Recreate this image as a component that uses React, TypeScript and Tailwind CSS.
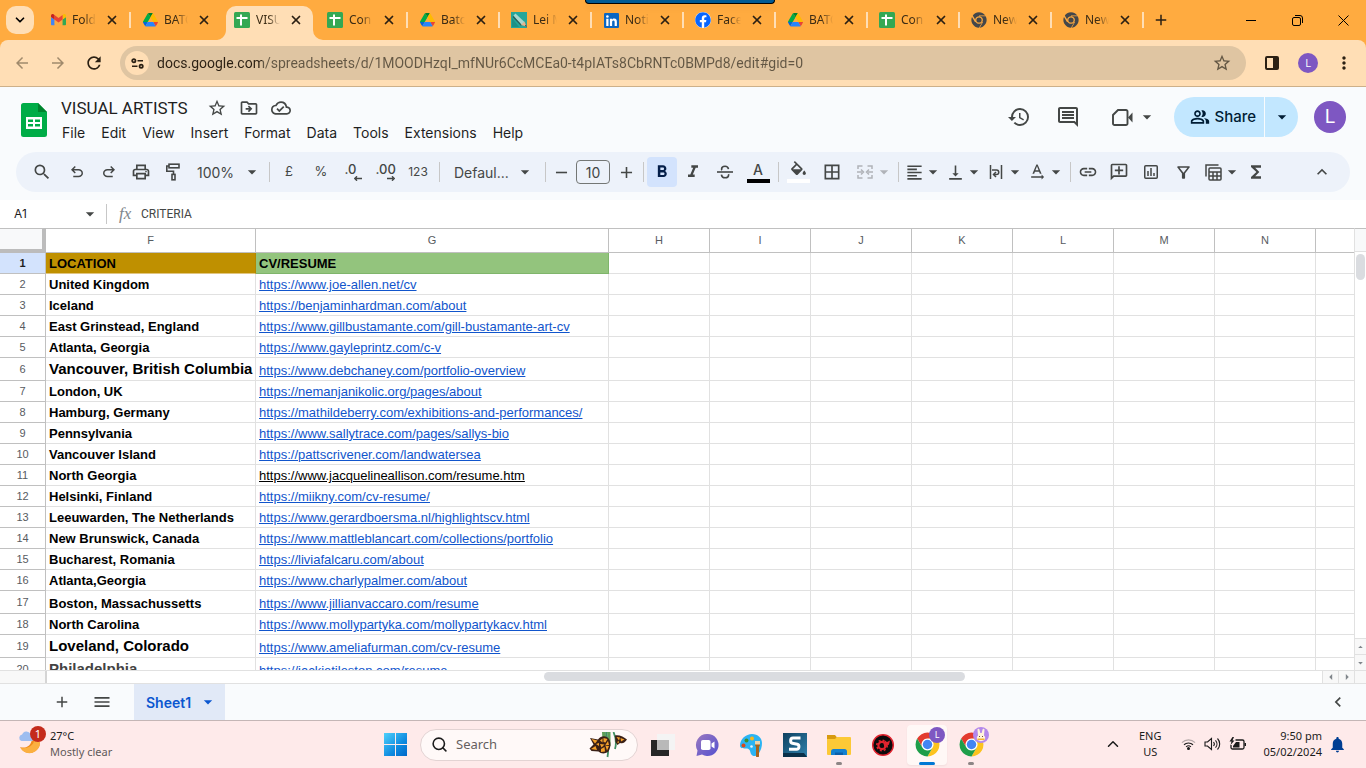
import React, { useState } from 'react';
import {
  MdAdd,
  MdArrowBack,
  MdArrowDropDown,
  MdArrowDropUp,
  MdArrowForward,
  MdArrowLeft,
  MdArrowRight,
  MdBorderAll,
  MdChevronLeft,
  MdFormatAlignLeft,
  MdFormatBold,
  MdFormatItalic,
  MdFunctions,
  MdHistory,
  MdKeyboardArrowUp,
  MdLink,
  MdMenu,
  MdMoreVert,
  MdNotifications,
  MdOutlineAddComment,
  MdOutlineCloudDone,
  MdOutlineComment,
  MdOutlineDriveFileMove,
  MdOutlineFilterAlt,
  MdOutlinePeopleAlt,
  MdOutlinePrint,
  MdRefresh,
  MdRemove,
  MdSearch,
  MdStarBorder,
  MdTextRotationNone,
  MdVerticalAlignBottom,
} from 'react-icons/md';
import { FaFacebook } from 'react-icons/fa';
import { ChevronDown, ChevronUp, Search, X } from 'lucide-react';

/* ---------- logos ---------- */

const GmailLogo = () => (
  <svg viewBox="52 42 88 66" className="w-[15px]">
    <path fill="#4285f4" d="M58 108h14V74L52 59v43c0 3.32 2.69 6 6 6" />
    <path fill="#34a853" d="M120 108h14c3.32 0 6-2.69 6-6V59l-20 15" />
    <path fill="#fbbc04" d="M120 48v26l20-15v-8c0-7.42-8.47-11.65-14.4-7.2" />
    <path fill="#ea4335" d="M72 74V48l24 18 24-18v26L96 92" />
    <path fill="#c5221f" d="M52 51v8l20 15V48l-5.6-4.2c-5.94-4.45-14.4-.22-14.4 7.2" />
  </svg>
);

const DriveLogo = () => (
  <svg viewBox="0 0 87.3 78" className="w-[15px]">
    <path fill="#0066da" d="m6.6 66.85 3.85 6.65c.8 1.4 1.95 2.5 3.3 3.3l13.75-23.8h-27.5c0 1.55.4 3.1 1.2 4.5z" />
    <path fill="#00ac47" d="m43.65 25-13.75-23.8c-1.35.8-2.5 1.9-3.3 3.3l-25.4 44a9.06 9.06 0 0 0 -1.2 4.5h27.5z" />
    <path fill="#ea4335" d="m73.55 76.8c1.35-.8 2.5-1.9 3.3-3.3l1.6-2.75 7.65-13.25c.8-1.4 1.2-2.95 1.2-4.5h-27.502l5.852 11.5z" />
    <path fill="#00832d" d="m43.65 25 13.75-23.8c-1.35-.8-2.9-1.2-4.5-1.2h-18.5c-1.6 0-3.15.45-4.5 1.2z" />
    <path fill="#2684fc" d="m59.8 53h-32.3l-13.75 23.8c1.35.8 2.9 1.2 4.5 1.2h50.8c1.6 0 3.15-.45 4.5-1.2z" />
    <path fill="#ffba00" d="m73.4 26.5-12.7-22c-.8-1.4-1.95-2.5-3.3-3.3l-13.75 23.8 16.15 28h27.45c0-1.55-.4-3.1-1.2-4.5z" />
  </svg>
);

const SheetFavicon = () => (
  <svg viewBox="0 0 16 16" className="w-4">
    <rect width="16" height="16" rx="1.5" fill="#34a853" />
    <path d="M2.5 6h11M7 2.5v11" stroke="#fff" strokeWidth="2" />
  </svg>
);

const PencilFavicon = () => (
  <svg viewBox="0 0 16 16" className="w-4">
    <rect width="16" height="16" fill="#26a69a" />
    <path d="M1 6v9h7z" fill="#1f9186" />
    <path d="M2.500 3.500l2-2 9 8.500-3 3.500z" fill="#a9d6cd" />
    <path d="M2 4.500l8.500 9" stroke="#2a5f58" strokeWidth="1.200" fill="none" />
    <path d="M10 13l3.500-3.500 2 5z" fill="#e8b48a" />
    <path d="M13.800 13.800l1.200-1 .8 2.200z" fill="#7a2e1c" />
  </svg>
);

const LinkedInLogo = () => (
  <svg viewBox="0 0 24 24" className="w-[15px]">
    <rect width="24" height="24" rx="1.8" fill="#0a66c2" />
    <circle cx="5.400" cy="5.500" r="2.100" fill="#fff" />
    <path
      fill="#fff"
      d="M3.600 9.200h3.600v11.400H3.600zM9.400 9.200h3.400v1.600c.6-1.100 1.800-1.900 3.500-1.900 3.500 0 4.300 2.300 4.300 5.400v6.300H17v-5.600c0-1.500-.1-3.100-1.900-3.100s-2.100 1.500-2.100 3v5.700H9.400z"
    />
  </svg>
);

const FacebookLogo = () => (
  <span className="rounded-full bg-white">
    <FaFacebook size={16} color="#0866ff" />
  </span>
);

interface ChromeLogoProps {
  colors: [string, string, string];
  dot: string;
  ring: string;
  gap?: string;
  className: string;
}

// Three identical bands turned by 120 degrees around the dot.
const ChromeLogo: React.FC<ChromeLogoProps> = ({ colors, dot, ring, gap, className }) => (
  <svg viewBox="1 1 46 46" className={className}>
    <circle cx="24" cy="24" r="12" fill={ring} />
    {colors.map((color, i) => (
      <g key={i} transform={`rotate(${i * 120} 24 24)`}>
        <path d="M4.950 13A22 22 0 0 1 43.050 13H24A11 11 0 0 0 14.470 29.500z" fill={color} />
        {gap && <path d="M24 13h22" stroke={gap} strokeWidth="4" />}
      </g>
    ))}
    <circle cx="24" cy="24" r={gap ? 7.5 : 8.7} fill={dot} />
  </svg>
);

const GreyChrome = () => (
  <ChromeLogo colors={['#44474a', '#44474a', '#44474a']} dot="#44474a" ring="#ffab40" gap="#ffab40" className="w-4" />
);

const SheetsLogo = () => (
  <svg viewBox="0 0 26 34" className="h-[34px] w-[26px]">
    <path d="M2.500 0H17l9 9v22.500a2.500 2.500 0 0 1-2.500 2.500h-21A2.500 2.500 0 0 1 0 31.500v-29A2.500 2.500 0 0 1 2.500 0z" fill="#00ac47" />
    <path d="M17 0l9 9h-9z" fill="#00832d" />
    <path d="M5 14h16v12H5zm2 2.500v2.500h5v-2.500zm7 0v2.500h5V16.500zM7 21v2.500h5V21zm7 0v2.500h5V21z" fill="#fff" fillRule="evenodd" />
  </svg>
);

/* ---------- toolbar drawings ---------- */

interface SymbolProps {
  d: string;
  size?: number;
}

const Symbol: React.FC<SymbolProps> = ({ d, size = 18 }) => (
  <svg viewBox="0 -960 960 960" width={size} height={size} fill="currentColor">
    <path d={d} />
  </svg>
);

const UndoIcon = () => (
  <Symbol d="M280-200v-80h284q63 0 109.500-40T720-420q0-60-46.500-100T564-560H312l104 104-56 56-200-200 200-200 56 56-104 104h252q97 0 166.500 63T800-420q0 94-69.500 157T564-200H280Z" />
);

const RedoIcon = () => (
  <Symbol d="M396-200q-97 0-166.500-63T160-420q0-94 69.500-157T396-640h252L544-744l56-56 200 200-200 200-56-56 104-104H396q-63 0-109.500 40T240-420q0 60 46.500 100T396-280h284v80H396Z" />
);

const PaintFormatIcon = () => (
  <svg viewBox="0 0 16 18" width="16" height="18" fill="none" stroke="currentColor" strokeWidth="1.600">
    <rect x="4" y="1.200" width="10" height="3.600" />
    <path d="M4 3H1.800v5.200h6.700v3" />
    <rect x="7" y="11.400" width="3" height="5.400" />
  </svg>
);

const StrikeIcon = () => (
  <svg viewBox="0 0 16 14" width="16" height="14" fill="none" stroke="currentColor" strokeWidth="1.600">
    <path d="M0 7h16" />
    <path d="M11.500 4.200C11.200 2.300 9.800 1.200 8 1.200S4.600 2.300 4.600 4c0 .5.1.9.3 1.200M4.400 9.600c.3 2 1.800 3.200 3.700 3.200s3.500-1.100 3.500-2.900c0-.3 0-.6-.1-.8" />
  </svg>
);

const FillIcon = () => (
  <svg viewBox="2 0 20 17" width="17" height="14" fill="currentColor">
    <path d="M16.560 8.940L7.620 0 6.210 1.410l2.380 2.380-5.150 5.150a1.490 1.490 0 0 0 0 2.120l5.500 5.500c.29.29.68.44 1.060.44s.77-.15 1.060-.44l5.500-5.500c.59-.58.59-1.530 0-2.120zM5.210 10L10 5.210 14.790 10H5.210zM19 11.500s-2 2.170-2 3.500c0 1.100.9 2 2 2s2-.9 2-2c0-1.330-2-3.500-2-3.500z" />
  </svg>
);

const MergeIcon = () => (
  <svg viewBox="0 0 16 14" width="16" height="14" fill="none" stroke="currentColor" strokeWidth="1.500">
    <path d="M5.500 1H1v3M1 10v3h4.500M10.500 1H15v3M15 10v3h-4.500M0 7h5.500M16 7h-5.500" />
    <path d="M4 4.500L6.500 7 4 9.500M12 4.500L9.500 7 12 9.500" />
  </svg>
);

const WrapIcon = () => (
  <svg viewBox="0 0 14 14" width="14" height="14" fill="none" stroke="currentColor" strokeWidth="1.500">
    <path d="M1.500 0v14M12.500 0v14M3 5h4.500a2.200 2.200 0 0 1 0 4.500H5" />
    <path d="M7 7L4.500 9.500 7 12" />
  </svg>
);

const ChartIcon = () => (
  <svg viewBox="0 0 14 14" width="14" height="14" fill="none" stroke="currentColor" strokeWidth="1.500">
    <rect x=".75" y=".75" width="12.500" height="12.500" rx="1" />
    <path d="M4 6v5M7 3v8M10 8v3" />
  </svg>
);

const TableViewIcon = () => (
  <svg viewBox="0 0 17 17" width="17" height="17" fill="none" stroke="currentColor" strokeWidth="1.500">
    <path d="M1 12.500V1h12.500" />
    <rect x="4" y="4" width="12" height="12" rx="1" />
    <path d="M4 8h12M4 12h12M8 8v8M12 8v8" />
  </svg>
);

const VideoIcon = () => (
  <svg viewBox="0 0 21 17" width="21" height="17" fill="currentColor">
    <path d="M6 1h8A1.500 1.500 0 0 1 15.500 2.500v12a1.500 1.500 0 0 1-1.500 1.500H2.500A1.500 1.500 0 0 1 1 14.500V6z" fill="none" stroke="currentColor" strokeWidth="1.900" />
    <path d="M16 8.500l4.500-5v10z" />
  </svg>
);

const SiteSettingsIcon = () => (
  <svg viewBox="0 0 14 12" width="13" height="11" fill="none" stroke="#2b2013" strokeWidth="1.900">
    <circle cx="3" cy="3" r="1.800" />
    <path d="M7 3h6M1 9h6" />
    <circle cx="11" cy="9" r="1.800" />
  </svg>
);

/* ---------- browser chrome ---------- */

const tabs = [
  { title: 'Fold', icon: <GmailLogo /> },
  { title: 'BATC', icon: <DriveLogo /> },
  { title: 'VISU', icon: <SheetFavicon />, active: true },
  { title: 'Con', icon: <SheetFavicon /> },
  { title: 'Batc', icon: <DriveLogo /> },
  { title: 'Lei M', icon: <PencilFavicon /> },
  { title: 'Noti', icon: <LinkedInLogo /> },
  { title: 'Face', icon: <FacebookLogo /> },
  { title: 'BATC', icon: <DriveLogo /> },
  { title: 'Con', icon: <SheetFavicon /> },
  { title: 'New', icon: <GreyChrome /> },
  { title: 'New', icon: <GreyChrome /> },
];

const TabStrip = () => (
  <div className="relative flex h-10 shrink-0 items-center bg-[#ffab40] pl-1.5">
    <div className="absolute top-0 left-[585px] h-1 w-[190px] rounded-b-sm border-x border-b border-black bg-[#005a94] shadow-md" />
    <button aria-label="Search tabs" className="flex size-7 items-center justify-center rounded-[10px] bg-[#ffdeb5]">
      <ChevronDown size={14} strokeWidth={3} />
    </button>
    <div role="tablist" className="ml-[5px] flex h-full">
      {tabs.map((tab, i) => {
        const beforeActive = tabs[i + 1]?.active;
        return (
          <div
            key={i}
            role="tab"
            aria-selected={!!tab.active}
            className={`relative flex w-[92px] items-center pl-[11px] ${tab.active ? 'mr-px' : ''}`}
          >
            {tab.active && (
              <svg viewBox="0 0 108 34" className="absolute bottom-0 -left-2 h-[34px] w-[108px]">
                <path d="M0 34a10 10 0 0 0 11-10V10A10 10 0 0 1 21 0h67a10 10 0 0 1 10 10v14a10 10 0 0 0 10 10z" fill="#ffdeb5" />
              </svg>
            )}
            <span className="relative flex w-4 justify-center">{tab.icon}</span>
            <span className="relative ml-1.5 w-6 overflow-hidden mask-r-from-50% font-[Noto_Sans,sans-serif] text-[12px] leading-4 whitespace-nowrap text-[#3b2b14]">
              {tab.title}
            </span>
            <button aria-label="Close tab" className="relative ml-[9px] text-[#2b2013]">
              <X size={14} strokeWidth={3} />
            </button>
            {!tab.active && !beforeActive && <span className="absolute right-0 h-4 w-0.5 bg-[#ffdeb5]" />}
          </div>
        );
      })}
    </div>
    <button aria-label="New tab" className="ml-2 text-[#2b2013]">
      <MdAdd size={18} />
    </button>
    <div className="ml-auto flex">
      <button aria-label="Minimize" className="flex w-[46px] justify-center">
        <svg width="10" height="10" stroke="#000"><path d="M0 5.500h10" /></svg>
      </button>
      <button aria-label="Restore" className="flex w-[46px] justify-center">
        <svg width="11" height="11" fill="none" stroke="#000">
          <rect x=".5" y="2.500" width="8" height="8" rx="1.500" />
          <path d="M3 .5h5a2.500 2.500 0 0 1 2.500 2.500v5" />
        </svg>
      </button>
      <button aria-label="Close" className="flex w-[46px] justify-center">
        <svg width="11" height="11" stroke="#000"><path d="M.5 .5l10 10M10.500 .5l-10 10" /></svg>
      </button>
    </div>
  </div>
);

const AddressBar = () => {
  const [url, setUrl] = useState('docs.google.com/spreadsheets/d/1MOODHzqI_mfNUr6CcMCEa0-t4pIATs8CbRNTc0BMPd8/edit#gid=0');

  return (
    <div className="bg-[#ffab40]">
      <div className="flex h-[47px] shrink-0 items-center rounded-t-lg border-b border-[#cdb08a] bg-[#ffdeb5] text-[#2b2013]">
        <button aria-label="Back" className="ml-3 flex w-5 justify-center text-[#a08a6c]"><MdArrowBack size={18} /></button>
        <button aria-label="Forward" className="ml-4 flex w-5 justify-center text-[#a08a6c]"><MdArrowForward size={18} /></button>
        <button aria-label="Reload" className="ml-4 flex w-5 justify-center"><MdRefresh size={20} /></button>
        <div className="ml-4 flex h-[34px] flex-1 items-center rounded-full bg-[#dfc5a2] pl-[5px]">
          <button aria-label="Site information" className="flex size-6 items-center justify-center rounded-full bg-[#ffdeb5]">
            <SiteSettingsIcon />
          </button>
          <input
            aria-label="Address"
            value={url}
            onChange={(e) => setUrl(e.target.value)}
            className="ml-2 h-6 flex-1 bg-[linear-gradient(to_right,#2b2013_105px,#635744_105px)] bg-clip-text font-[Roboto,sans-serif] text-[14px] text-transparent outline-none"
          />
          <button aria-label="Bookmark" className="mr-3.5 text-[#635744]"><MdStarBorder size={20} /></button>
        </div>
        <button aria-label="Side panel" className="ml-[18px]">
          <svg width="16" height="16" viewBox="0 0 16 16">
            <rect x="2" y="2" width="12" height="12" rx="1" fill="none" stroke="#2b2013" strokeWidth="2" />
            <path d="M9 2h5v12H9z" fill="#2b2013" />
          </svg>
        </button>
        <span className="ml-[18px] flex size-5 items-center justify-center rounded-full bg-[#7e57c2] text-[11px] text-white">L</span>
        <button aria-label="Menu" className="mr-3 ml-4"><MdMoreVert size={20} /></button>
      </div>
    </div>
  );
};

/* ---------- docs header ---------- */

const menus = ['File', 'Edit', 'View', 'Insert', 'Format', 'Data', 'Tools', 'Extensions', 'Help'];

const DocsHeader = () => (
  <header className="flex h-[65px] shrink-0 items-start font-[Inter,sans-serif] text-[#444746]">
    <div className="mt-4 ml-[21px]"><SheetsLogo /></div>
    <div className="ml-3.5 pt-2">
      <div className="flex h-[26px] items-center">
        <h1 className="font-[Roboto,sans-serif] text-[17px] leading-6 text-[#1f1f1f]">VISUAL ARTISTS</h1>
        <button aria-label="Star" className="ml-[19px]"><MdStarBorder size={20} /></button>
        <button aria-label="Move" className="ml-3"><MdOutlineDriveFileMove size={20} /></button>
        <button aria-label="Document status" className="ml-3"><MdOutlineCloudDone size={20} /></button>
      </div>
      <nav className="flex gap-4 pt-0.5 pl-px text-[14px] leading-5 text-[#1f1f1f]">
        {menus.map((m) => (
          <button key={m}>{m}</button>
        ))}
      </nav>
    </div>
    <div className="mt-2.5 ml-auto flex h-10 items-center">
      <button aria-label="History" className="flex w-6 justify-center"><MdHistory size={24} /></button>
      <button aria-label="Comments" className="ml-[25px] flex w-6 justify-center"><MdOutlineComment size={24} /></button>
      <button aria-label="Join a call" className="ml-8 flex items-center">
        <VideoIcon />
        <MdArrowDropDown size={20} className="ml-1" />
      </button>
      <button className="ml-[17px] flex h-10 items-center rounded-l-full bg-[#c2e7ff] pr-2 pl-4 text-[15px] font-medium text-[#001d35]">
        <MdOutlinePeopleAlt size={20} className="mr-1" />
        Share
      </button>
      <button aria-label="Share options" className="ml-px flex h-10 w-[33px] items-center justify-center rounded-r-full bg-[#c2e7ff] text-[#001d35]">
        <MdArrowDropDown size={20} />
      </button>
      <button className="mr-5 ml-4 size-8 rounded-full bg-[#7e57c2] text-[19px] leading-8 text-white">L</button>
    </div>
  </header>
);

interface ToolProps {
  label: string;
  className?: string;
  children: React.ReactNode;
}

const Tool: React.FC<ToolProps> = ({ label, className = 'w-8', children }) => (
  <button aria-label={label} className={`flex h-[30px] shrink-0 items-center justify-center rounded ${className}`}>
    {children}
  </button>
);

const DropTool: React.FC<ToolProps> = ({ label, className = '', children }) => (
  <button aria-label={label} className={`flex h-[30px] w-[41px] shrink-0 items-center ${className}`}>
    <span className="flex w-6 shrink-0 justify-center">{children}</span>
    <MdArrowDropDown size={20} className="-ml-[3px] shrink-0" />
  </button>
);

const Divider = () => (
  <span className="flex w-2 shrink-0 justify-center">
    <span className="h-5 w-px bg-[#c7c7c7]" />
  </span>
);

const SmallArrow: React.FC<{ flip?: boolean }> = ({ flip }) => (
  <svg viewBox="0 0 8 5" className={`absolute right-0 bottom-0 h-[5px] w-2 ${flip ? 'rotate-180' : ''}`}>
    <path d="M8 2.500H2M3 .3L.8 2.500 3 4.700" fill="none" stroke="#444746" strokeWidth="1.400" />
  </svg>
);

const Toolbar = () => {
  const [fontSize, setFontSize] = useState('10');

  return (
    <div className="mx-4 mb-2 flex h-10 shrink-0 items-center rounded-full bg-[#edf2fa] pl-2.5 font-[Inter,sans-serif] text-[#444746]">
      <Tool label="Search the menus" className="mr-[3px] w-8"><MdSearch size={20} /></Tool>
      <Tool label="Undo"><UndoIcon /></Tool>
      <Tool label="Redo"><RedoIcon /></Tool>
      <Tool label="Print"><MdOutlinePrint size={20} /></Tool>
      <Tool label="Paint format"><PaintFormatIcon /></Tool>
      <Tool label="Zoom" className="w-[76px] pr-[3px] pl-2 text-[14px]">
        <span className="flex-1 text-left">100%</span>
        <MdArrowDropDown size={20} />
      </Tool>
      <Divider />
      <Tool label="Currency" className="w-8 text-[13px]">£</Tool>
      <Tool label="Percent" className="w-8 text-[13px]">%</Tool>
      <Tool label="Decrease decimals">
        <span className="relative h-[18px] w-[17px] text-left text-[13px] leading-3 font-medium">.0<SmallArrow /></span>
      </Tool>
      <Tool label="Increase decimals">
        <span className="relative h-[18px] w-[19px] text-left text-[13px] leading-3 font-medium">.00<SmallArrow flip /></span>
      </Tool>
      <Tool label="More formats" className="w-[34px] text-[12px]">123</Tool>
      <Divider />
      <Tool label="Font" className="w-[98px] pr-1.5 pl-[11px] text-[14px]">
        <span className="flex-1 text-left">Defaul...</span>
        <MdArrowDropDown size={20} />
      </Tool>
      <Divider />
      <Tool label="Decrease font size" className="w-6"><MdRemove size={19} /></Tool>
      <input
        aria-label="Font size"
        value={fontSize}
        onChange={(e) => setFontSize(e.target.value)}
        className="mx-[3px] h-6 w-[34px] rounded border border-[#747775] text-center text-[14px] outline-none"
      />
      <Tool label="Increase font size" className="w-[26px]"><MdAdd size={19} /></Tool>
      <Divider />
      <Tool label="Bold" className="w-[30px] bg-[#d3e3fd] text-[#041e49]"><MdFormatBold size={20} /></Tool>
      <Tool label="Italic"><MdFormatItalic size={20} /></Tool>
      <Tool label="Strikethrough"><StrikeIcon /></Tool>
      <Tool label="Text color" className="ml-px w-8">
        <span className="flex w-[23px] flex-col items-center border-b-4 border-black text-[14px] leading-[18px] font-medium">A</span>
      </Tool>
      <Divider />
      <Tool label="Fill color">
        <span className="flex h-[22px] w-[23px] flex-col items-center border-b-4 border-white"><FillIcon /></span>
      </Tool>
      <Tool label="Borders" className="ml-0.5 w-8"><MdBorderAll size={20} /></Tool>
      <DropTool label="Merge cells" className="ml-[5px] text-[#b0b3b8]"><MergeIcon /></DropTool>
      <Divider />
      <DropTool label="Horizontal align"><MdFormatAlignLeft size={19} /></DropTool>
      <DropTool label="Vertical align"><MdVerticalAlignBottom size={19} /></DropTool>
      <DropTool label="Text wrapping"><WrapIcon /></DropTool>
      <DropTool label="Text rotation"><MdTextRotationNone size={20} /></DropTool>
      <Divider />
      <Tool label="Insert link" className="w-7"><MdLink size={20} /></Tool>
      <Tool label="Insert comment" className="ml-px w-8"><MdOutlineAddComment size={20} className="-scale-x-100" /></Tool>
      <Tool label="Insert chart"><ChartIcon /></Tool>
      <Tool label="Create a filter"><MdOutlineFilterAlt size={19} /></Tool>
      <DropTool label="Filter views" className="pl-0.5"><TableViewIcon /></DropTool>
      <Tool label="Functions"><MdFunctions size={20} /></Tool>
      <Tool label="Hide the menus" className="mr-3 ml-auto w-8"><MdKeyboardArrowUp size={20} /></Tool>
    </div>
  );
};

const FormulaBar = () => {
  const [cell, setCell] = useState('A1');
  const [formula, setFormula] = useState('CRITERIA');

  return (
    <div className="flex h-7 shrink-0 items-center bg-white font-[Inter,sans-serif] text-[12px] text-[#1f1f1f]">
      <input
        aria-label="Name box"
        value={cell}
        onChange={(e) => setCell(e.target.value)}
        className="w-20 pl-3.5 outline-none"
      />
      <button aria-label="Named ranges"><MdArrowDropDown size={20} className="text-[#444746]" /></button>
      <span className="ml-1.5 h-5 w-px bg-[#c7c7c7]" />
      <span className="ml-3 w-[22px] font-[Liberation_Serif,serif] text-[17px] leading-5 text-[#80868b] italic">fx</span>
      <input
        aria-label="Formula"
        value={formula}
        onChange={(e) => setFormula(e.target.value)}
        className="flex-1 font-[Roboto,sans-serif] text-[#444746] outline-none"
      />
    </div>
  );
};

/* ---------- grid ---------- */

interface Row {
  place: string;
  link: string;
  tall?: boolean;
  big?: boolean;
}

const rows: Row[] = [
  { place: 'United Kingdom', link: 'https://www.joe-allen.net/cv' },
  { place: 'Iceland', link: 'https://benjaminhardman.com/about' },
  { place: 'East Grinstead, England', link: 'https://www.gillbustamante.com/gill-bustamante-art-cv' },
  { place: 'Atlanta, Georgia', link: 'https://www.gayleprintz.com/c-v' },
  { place: 'Vancouver, British Columbia', link: 'https://www.debchaney.com/portfolio-overview', tall: true, big: true },
  { place: 'London, UK', link: 'https://nemanjanikolic.org/pages/about' },
  { place: 'Hamburg, Germany', link: 'https://mathildeberry.com/exhibitions-and-performances/' },
  { place: 'Pennsylvania', link: 'https://www.sallytrace.com/pages/sallys-bio' },
  { place: 'Vancouver Island', link: 'https://pattscrivener.com/landwatersea' },
  { place: 'North Georgia', link: 'https://www.jacquelineallison.com/resume.htm' },
  { place: 'Helsinki, Finland', link: 'https://miikny.com/cv-resume/' },
  { place: 'Leeuwarden, The Netherlands', link: 'https://www.gerardboersma.nl/highlightscv.html' },
  { place: 'New Brunswick, Canada', link: 'https://www.mattleblancart.com/collections/portfolio' },
  { place: 'Bucharest, Romania', link: 'https://liviafalcaru.com/about' },
  { place: 'Atlanta,Georgia', link: 'https://www.charlypalmer.com/about' },
  { place: 'Boston, Massachussetts', link: 'https://www.jillianvaccaro.com/resume', tall: true },
  { place: 'North Carolina', link: 'https://www.mollypartyka.com/mollypartykacv.html' },
  { place: 'Loveland, Colorado', link: 'https://www.ameliafurman.com/cv-resume', tall: true, big: true },
  { place: 'Philadelphia', link: 'https://jackietileston.com/resume', tall: true, big: true },
];

const emptyColumns = ['H', 'I', 'J', 'K', 'L', 'M', 'N', ''];

const RowNumber: React.FC<{ n: number; selected?: boolean }> = ({ n, selected }) => (
  <th
    scope="row"
    className={`border-r border-b border-[#c0c0c0] text-[11px] leading-4 ${
      selected ? 'bg-[#d3e3fd] font-bold text-[#1f1f1f]' : 'font-normal text-[#575b5f]'
    }`}
  >
    {n}
  </th>
);

const EmptyCells = () => (
  <>
    {emptyColumns.map((c) => (
      <td key={c} className={`border-b border-[#e1e1e1] ${c ? 'border-r' : ''}`} />
    ))}
  </>
);

const Grid = () => (
  <div className="min-w-0 flex-1 overflow-hidden">
    <table className="w-full table-fixed border-separate border-spacing-0 bg-white font-[Liberation_Sans,Arial,sans-serif] text-[13px] leading-[18px] text-black">
      <colgroup>
        <col className="w-[46px]" />
        <col className="w-[210px]" />
        <col className="w-[353px]" />
        {emptyColumns.map((c) => (
          <col key={c} className={c ? 'w-[101px]' : ''} />
        ))}
      </colgroup>
      <thead>
        <tr className="h-[25px] text-[11px] text-[#575b5f]">
          <th aria-label="Select all" className="border-t border-r-4 border-b-4 border-t-[#c0c0c0] border-r-[#bcbcbc] border-b-[#bcbcbc] bg-[#f8f9fa]" />
          {['F', 'G', ...emptyColumns].map((c) => (
            <th key={c} scope="col" className={`border-y border-[#c0c0c0] pb-0.5 font-normal ${c ? 'border-r' : ''}`}>{c}</th>
          ))}
        </tr>
      </thead>
      <tbody>
        <tr className="h-[21px]">
          <RowNumber n={1} selected />
          <td className="border-r border-b border-[#b28700] border-b-[#e1c580] bg-[#bf9000] pl-[3px] align-bottom font-bold">LOCATION</td>
          <td className="border-r border-b border-[#7fb56b] bg-[#93c47d] pl-[3px] align-bottom font-bold">CV/RESUME</td>
          <EmptyCells />
        </tr>
        {rows.map((row, i) => (
          <tr key={row.link} className={row.tall ? 'h-[23px]' : 'h-[21px]'}>
            <RowNumber n={i + 2} />
            <td
              className={`overflow-hidden border-r border-b border-[#e1e1e1] pl-[3px] align-bottom font-bold whitespace-nowrap ${
                row.big ? 'text-[15px] leading-[22px]' : ''
              } ${i === rows.length - 1 ? 'text-[#434343]' : ''}`}
            >
              {row.place}
            </td>
            <td className="overflow-hidden border-r border-b border-[#e1e1e1] pl-[3px] align-bottom whitespace-nowrap">
              <a href={row.link} className={`underline ${i === 9 ? 'text-black' : 'text-[#1155cc]'}`}>{row.link}</a>
            </td>
            <EmptyCells />
          </tr>
        ))}
      </tbody>
    </table>
  </div>
);

const scrollButton = 'flex items-center justify-center border-[#e1e1e1] bg-[#f8f8f8] text-[#80868b]';

const VerticalScrollbar = () => (
  <div className="flex w-3 shrink-0 flex-col border-t border-l border-[#e1e1e1] border-t-[#c0c0c0] bg-white">
    <div className="h-[23px] border-b border-[#e1e1e1] bg-[#f8f9fa]" />
    <div className="mx-px mt-0.5 h-[26px] rounded-full bg-[#dadce0]" />
    <button aria-label="Scroll up" className={`mt-auto h-4 w-full border-t ${scrollButton}`}><MdArrowDropUp size={14} /></button>
    <button aria-label="Scroll down" className={`h-4 w-full border-t ${scrollButton}`}><MdArrowDropDown size={14} /></button>
  </div>
);

const HorizontalScrollbar = () => (
  <div className="flex h-3.5 shrink-0 border-y border-[#e1e1e1] bg-white">
    <div className="w-[47px] border-r-2 border-[#d5d5d5] bg-[#f8f8f8]" />
    <div className="flex flex-1 items-start pt-px">
      <div className="ml-[39%] h-[9px] w-[33%] rounded-full bg-[#dadce0]" />
    </div>
    <button aria-label="Scroll left" className={`w-4 border-l ${scrollButton}`}><MdArrowLeft size={14} /></button>
    <button aria-label="Scroll right" className={`w-4 border-l ${scrollButton}`}><MdArrowRight size={14} /></button>
    <div className="w-3 border-l border-[#e1e1e1] bg-[#f8f8f8]" />
  </div>
);

const SheetBar = () => (
  <div className="flex h-9 shrink-0 items-center bg-[#f9fbfd] font-[Inter,sans-serif] text-[#444746]">
    <button aria-label="Add sheet" className="ml-[53px]"><MdAdd size={18} /></button>
    <button aria-label="All sheets" className="ml-[21px]"><MdMenu size={20} /></button>
    <button className="ml-[22px] flex h-full w-[91px] items-center bg-[#e1e9f7] pl-3 text-[14px] font-semibold text-[#0b57d0]">
      Sheet1
      <MdArrowDropDown size={20} className="ml-[7px]" />
    </button>
    <button aria-label="Show side panel" className="mr-[18px] ml-auto"><MdChevronLeft size={20} /></button>
  </div>
);

/* ---------- windows taskbar ---------- */

const WeatherIcon = () => (
  <svg viewBox="0 0 24 24" width="24" height="24">
    <path d="M22 12a10.500 10.500 0 0 1-20 5c6 2 11-1 12-8z" fill="#f08c1c" />
    <path d="M22 12a10.500 10.500 0 0 1-19.500 6c8 1 13.500-3 13.500-8z" fill="#fbb040" />
    <path d="M3.500 11a3.300 3.300 0 0 1 .6-6.400A4.500 4.500 0 0 1 12.500 4 3.500 3.500 0 0 1 13 11z" fill="#9dbdf0" />
  </svg>
);

const WindowsLogo = () => (
  <svg viewBox="0 0 23 23" width="23" height="23">
    <defs>
      <linearGradient id="win" x1="0" y1="0" x2="1" y2="1" gradientUnits="objectBoundingBox">
        <stop offset="0" stopColor="#4fd0fb" />
        <stop offset=".6" stopColor="#0f8be0" />
        <stop offset="1" stopColor="#0067c8" />
      </linearGradient>
    </defs>
    <path d="M0 0h11v11H0zM12 0h11v11H12zM0 12h11v11H0zM12 12h11v11H12z" fill="url(#win)" />
  </svg>
);

const ButterflyArt = () => (
  <svg viewBox="0 0 38 26" width="38" height="26">
    <path d="M13 0h3.500l1 8h-4zM18 0h3.500v14h-2z" fill="#5f9f57" />
    <path d="M17 0c2 9 3 17 1.500 25M24.500 0c3 7 3 12 1.500 17" stroke="#3f8f63" strokeWidth="1.800" fill="none" />
    <path d="M1 6l8 1.500c3-4 8-4.500 11-.5 2.500 4 1.500 10-1 13-3 2-7 2-9.500-.5l-7-.5-2-2.500 4-4z" fill="#3b2016" />
    <path
      d="M11 8.500l2.500-2v4zM14.500 6l4 1-2 3.500-2-.5zM19 9l1 4-4 .5zM11 12l4.500.5-3 3zM16.500 14h3.500l-2 4.500zM12 17l3.500-2 .5 4.500-4 .5zM2.500 7l6 1.500-2.500 3zM2 17l4.500-3 1.500 4zM7 12l3-1v3z"
      fill="#f4a12b"
    />
    <path d="M26 3.500c4-1 9 1.500 12 4-2 3-4 4.500-7 3.500l-2.500 2-2-3z" fill="#3b2016" />
    <path d="M27.500 5l3.500.5-1 3zM31.500 6l4 1.500-3.500 2zM28 10l2-1-.5 2.500z" fill="#f4a12b" />
  </svg>
);

const TaskViewIcon = () => (
  <svg viewBox="0 0 24 22" width="24" height="22">
    <rect y="6" width="18" height="16" fill="#262626" />
    <rect x="6" width="18" height="16" fill="#f4f4f4" />
    <rect x="6" y="6" width="12" height="10" fill="#b9b9b9" />
  </svg>
);

const ChatIcon = () => (
  <svg viewBox="0 0 24 24" width="24" height="24">
    <defs>
      <linearGradient id="chat" x1="0" y1="0" x2="1" y2="1">
        <stop offset="0" stopColor="#9a79bf" />
        <stop offset="1" stopColor="#5450d0" />
      </linearGradient>
    </defs>
    <path d="M12.500 1a11 11 0 1 1-5.500 20.500L1.500 23l1-5.500A11 11 0 0 1 12.500 1z" fill="url(#chat)" />
    <rect x="6" y="7" width="9.500" height="10" rx="1.800" fill="#fff" />
    <path d="M16.500 10.500l3-2v7l-3-2z" fill="#fff" />
  </svg>
);

const PaintIcon = () => (
  <svg viewBox="0 0 24 24" width="24" height="24">
    <path d="M13 1c6 0 10 4 10 9 0 4-1 7-4 12-3 2-6 1-7-1-1-3-1-5-4-5.500C6 15 1 16.500 1 12.500 1 6 7 1 13 1z" fill="#2bb4f3" />
    <circle cx="12.500" cy="13.500" r="1.300" fill="#e9f7ff" />
    <circle cx="4.500" cy="12.500" r="2" fill="#d9481c" />
    <circle cx="7.500" cy="7.500" r="2" fill="#3e8e2f" />
    <circle cx="13" cy="5.500" r="2" fill="#f9b81a" />
    <path d="M16 8h5v4l-1 2v9a1.500 1.500 0 0 1-3 0v-9l-1-2z" fill="#a5641e" />
    <path d="M16 8h5v3.500h-5z" fill="#ead4ae" />
  </svg>
);

const SIcon = () => (
  <svg viewBox="0 0 24 24" width="24" height="24">
    <defs>
      <linearGradient id="snag" x1="0" y1="0" x2="1" y2="1">
        <stop offset="0" stopColor="#0f4160" />
        <stop offset="1" stopColor="#2f82ad" />
      </linearGradient>
    </defs>
    <rect width="24" height="24" fill="url(#snag)" />
    <path d="M0 20h21l3 4H0z" fill="#0a3049" />
    <path d="M17.500 5H10a2.300 2.300 0 0 0-2.300 2.300v.9a2 2 0 0 0 1.600 2l5 1.100a2 2 0 0 1 1.600 2v.7a2.300 2.300 0 0 1-2.300 2.300H6" fill="none" stroke="#fff" strokeWidth="3" />
  </svg>
);

const FolderIcon = () => (
  <svg viewBox="0 0 24 22" width="24" height="22">
    <path d="M0 1h8l2 2.500L8 6H0z" fill="#d79a10" />
    <path d="M0 5h8l2-2h13a1 1 0 0 1 1 1v16a1 1 0 0 1-1 1H1a1 1 0 0 1-1-1z" fill="#fcc936" />
    <path d="M4 21v-3.500A2.500 2.500 0 0 1 6.500 15h11a2.500 2.500 0 0 1 2.500 2.500V21z" fill="#1380d0" />
    <path d="M8 18.500h8V21H8z" fill="#0c5ea8" />
  </svg>
);

const RedGearIcon = () => (
  <svg viewBox="0 0 24 24" width="24" height="24">
    <circle cx="12" cy="12" r="10.300" fill="#0c0c0c" stroke="#e0232e" strokeWidth="1.500" />
    <circle cx="11" cy="12.500" r="3.600" fill="none" stroke="#e0232e" strokeWidth="2.200" />
    <circle cx="11" cy="12.500" r="5.200" fill="none" stroke="#e0232e" strokeWidth="1.600" strokeDasharray="2 2.080" />
    <path d="M12 12l2-4.500 2 1.500 3-1.500-1 4-4 3z" fill="#e0232e" />
    <path d="M10 11l3 1-2.500 2.500" fill="none" stroke="#0c0c0c" />
  </svg>
);

const ColorChrome = () => (
  <ChromeLogo colors={['#e33b2e', '#fcc31e', '#1e9e4a']} dot="#4285f4" ring="#fff" className="size-[25px]" />
);

const apps = [
  { name: 'Task View', icon: <TaskViewIcon /> },
  { name: 'Chat', icon: <ChatIcon /> },
  { name: 'Paint', icon: <PaintIcon /> },
  { name: 'Snagit', icon: <SIcon /> },
  { name: 'File Explorer', icon: <FolderIcon />, running: true },
  { name: 'Recorder', icon: <RedGearIcon /> },
  {
    name: 'Google Chrome',
    active: true,
    icon: (
      <>
        <ColorChrome />
        <span className="absolute top-0.5 right-0.5 size-4 rounded-full bg-[#7e57c2] text-center text-[9px] leading-4 text-white">L</span>
      </>
    ),
  },
  {
    name: 'Google Chrome 2',
    running: true,
    icon: (
      <>
        <ColorChrome />
        <svg viewBox="0 0 16 16" className="absolute top-0.5 right-0.5 size-4">
          <circle cx="8" cy="8" r="8" fill="#b388eb" />
          <path d="M5 8.500L4.500 3a1 1 0 0 1 2-.3L7.300 6h1.400l.8-3.300a1 1 0 0 1 2 .3L11 8.500a3.500 3.500 0 0 1 .5 4.500c-2 1.500-5 1.500-7 0A3.500 3.500 0 0 1 5 8.500z" fill="#fff3dc" />
          <path d="M4.500 11.500h7v1.500h-7z" fill="#f2b632" />
          <path d="M6.500 9v1M9.500 9v1" stroke="#5b3a2a" strokeWidth=".9" />
        </svg>
      </>
    ),
  },
];

const WifiIcon = () => (
  <svg viewBox="0 0 16 12" width="15" height="12" fill="none" stroke="#1b1b1b" strokeWidth="1.200">
    <path d="M1 4.500a10 10 0 0 1 14 0" stroke="#b5a9a9" />
    <path d="M3.200 6.800a7 7 0 0 1 9.600 0M5.400 9a4 4 0 0 1 5.200 0" />
    <circle cx="8" cy="10.800" r="1" fill="#1b1b1b" />
  </svg>
);

const VolumeIcon = () => (
  <svg viewBox="0 0 17 14" width="17" height="14" fill="none" stroke="#1b1b1b" strokeWidth="1.100">
    <path d="M1 5v4h2.500L7.500 12.500v-11L3.500 5z" />
    <path d="M9.500 5a3 3 0 0 1 0 4M11.500 3.300a5.500 5.500 0 0 1 0 7.400M13.500 1.500a8 8 0 0 1 0 11" />
  </svg>
);

const BatteryIcon = () => (
  <svg viewBox="0 0 17 14" width="17" height="14" fill="none" stroke="#1b1b1b">
    <path d="M6.500 3h7A1.500 1.500 0 0 1 15 4.500v6a1.500 1.500 0 0 1-1.500 1.500h-10A1.500 1.500 0 0 1 2 10.500V8" strokeWidth="1.300" />
    <path d="M4 10.500V9l3-4h3.500v5.500z" fill="#1b1b1b" stroke="none" />
    <path d="M15.500 6h1.500v3h-1.500z" fill="#1b1b1b" stroke="none" />
    <path d="M3.500 0L.5 4.500h2L1.500 8l4-4.500h-2L5 0z" fill="#1b1b1b" stroke="none" />
  </svg>
);

const Taskbar = () => (
  <footer className="grid h-12 shrink-0 grid-cols-[1fr_auto_1fr] items-center border-t border-[#c4b6b6] bg-[#feeaea] font-[Noto_Sans,sans-serif] text-[#1b1b1b]">
    <button className="flex items-center pb-0.5 pl-[18px] text-left leading-4">
      <span className="relative mb-1">
        <WeatherIcon />
        <span className="absolute -top-1 -right-1 size-4 rounded-full bg-[#c42b1c] text-center text-[11px] leading-4 text-white">1</span>
      </span>
      <span className="ml-2 text-[11px]">
        <span className="block">27°C</span>
        <span className="block text-[#5f5959]">Mostly clear</span>
      </span>
    </button>
    <div className="flex items-center">
      <button aria-label="Start" className="flex w-11 justify-center"><WindowsLogo /></button>
      <label className="mx-[3px] flex h-8 w-[218px] items-center rounded-full border border-[#e3d3d3] bg-[#fff9f8] pr-2.5 pl-2.5">
        <Search size={17} strokeWidth={2.25} />
        <input type="search" placeholder="Search" className="ml-2 min-w-0 flex-1 text-[13px] outline-none placeholder:text-[#665f5f]" />
        <ButterflyArt />
      </label>
      {apps.map((app) => (
        <button
          key={app.name}
          aria-label={app.name}
          className={`relative mx-0.5 flex h-10 w-10 items-center justify-center rounded ${app.active ? 'bg-[#fff8f6] shadow-xs' : ''}`}
        >
          {app.icon}
          {app.active && <span className="absolute bottom-0 h-[3px] w-4 rounded-full bg-[#0078d4]" />}
          {app.running && <span className="absolute bottom-0 h-[3px] w-1.5 rounded-full bg-[#8d8585]" />}
        </button>
      ))}
    </div>
    <div className="flex items-center justify-end pr-[19px] pb-px text-[11px] leading-4">
      <button aria-label="Show hidden icons"><ChevronUp size={18} /></button>
      <button className="ml-[17px] text-center">ENG<br />US</button>
      <button aria-label="Network and sound" className="mr-[17px] ml-5 flex items-center gap-2">
        <WifiIcon />
        <VolumeIcon />
        <BatteryIcon />
      </button>
      <button className="text-right">9:50 pm<br />05/02/2024</button>
      <button aria-label="Notifications" className="ml-1.5 text-[#003e92]"><MdNotifications size={19} /></button>
    </div>
  </footer>
);

export default function App() {
  return (
    <div className="flex h-screen flex-col overflow-hidden bg-[#f9fbfd] font-[Open_Sans,sans-serif]">
      <TabStrip />
      <AddressBar />
      <DocsHeader />
      <Toolbar />
      <FormulaBar />
      <main className="flex min-h-0 flex-1">
        <Grid />
        <VerticalScrollbar />
      </main>
      <HorizontalScrollbar />
      <SheetBar />
      <Taskbar />
    </div>
  );
}
